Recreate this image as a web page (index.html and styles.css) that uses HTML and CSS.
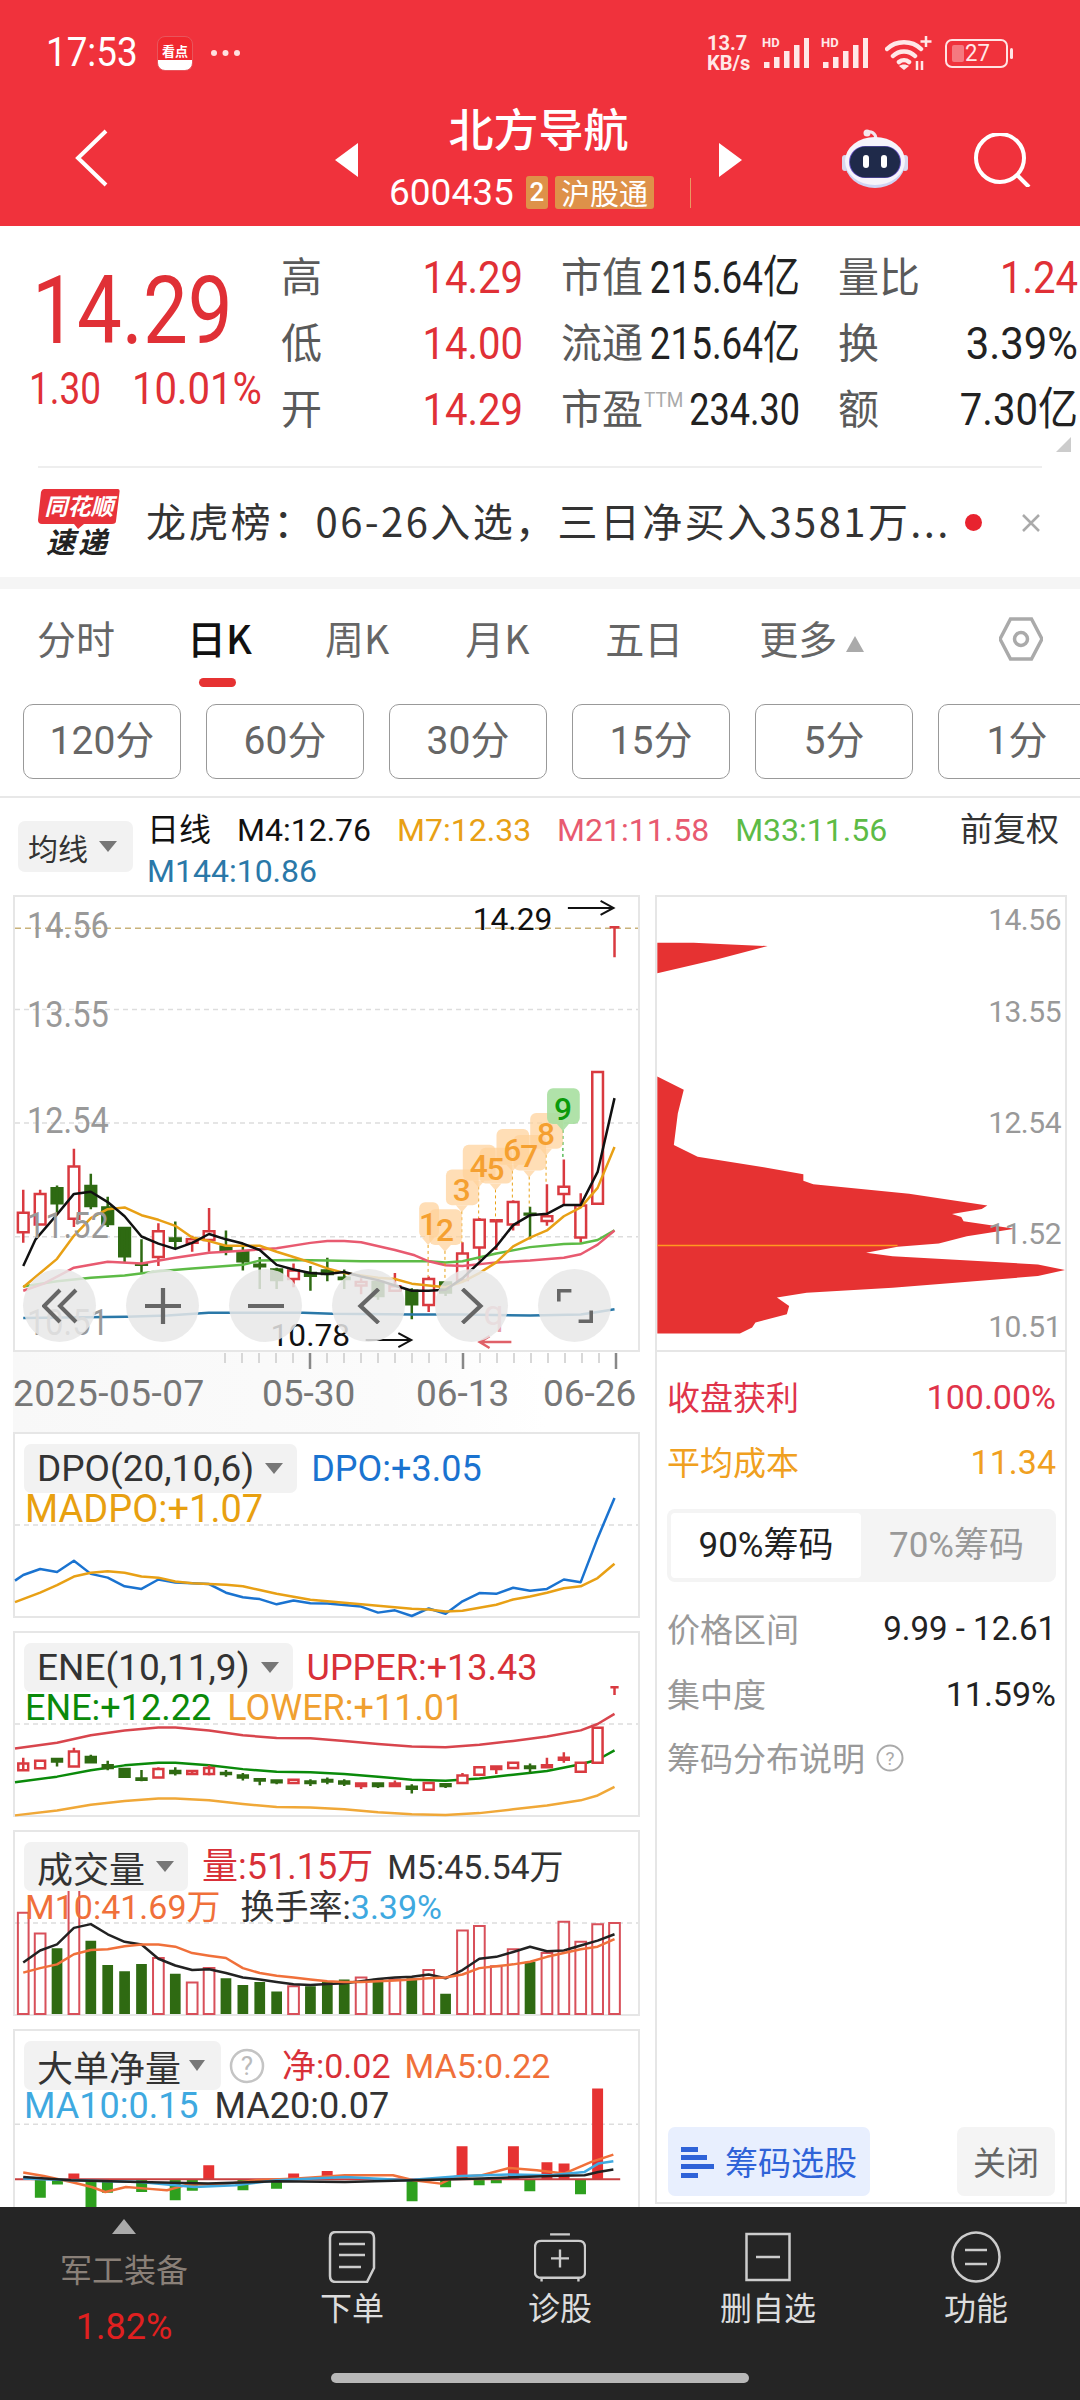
FILE: index.html
```html
<!DOCTYPE html>
<html lang="zh-CN">
<head>
<meta charset="utf-8">
<title>北方导航</title>
<link rel="stylesheet" href="styles.css">
</head>
<body>
<header class="hdr">
  <div class="status">
    <span class="clock">17:53</span>
    <span class="appicon"><span class="appicon-t">看点</span></span>
    <svg class="dots" viewBox="0 0 31 8"><circle cx="4" cy="4" r="3"/><circle cx="15.5" cy="4" r="3"/><circle cx="27" cy="4" r="3"/></svg>
    <div class="status-r">
      <span class="speed">13.7<br>KB/s</span>
      <div class="sigwrap"><span class="hd">HD</span><svg class="sig" viewBox="0 0 47 32"><path d="M2 25h5.500v6H2zM12 20h5.500v11H12zM22 14h5.500v17H22zM32 8h5.500v23H32zM42 1h5.500v30H42z"/></svg></div>
      <div class="sigwrap"><span class="hd">HD</span><svg class="sig" viewBox="0 0 47 32"><path d="M2 25h5.500v6H2zM12 20h5.500v11H12zM22 14h5.500v17H22zM32 8h5.500v23H32zM42 1h5.500v30H42z"/></svg></div>
      <svg class="wifi" viewBox="0 0 48 34"><path class="ws" d="M2 13C11 4 27 4 36 13M8 20c6-6 16-6 22 0M14 26c3-2.500 7-2.500 10 0"/><path d="M19 34l-5-4c3-2 7-2 10 0z" fill="#ffe8e8"/><path class="ws2" d="M41 0v11M35.500 5.500h11M32 25v9M37 25v9"/></svg>
      <span class="batt"><span class="batt-fill"></span><span class="batt-n">27</span></span>
    </div>
  </div>
  <div class="titlebar">
    <div class="tb-l"><svg class="back" viewBox="0 0 33 58"><path d="M31 2 3 29l28 27"/></svg></div>
    <div class="tb-c">
      <svg class="tri" viewBox="0 0 23 34"><path d="M23 0v34L0 17z"/></svg>
      <div class="stack">
        <div class="name">北方导航</div>
        <div class="coderow"><span class="code">600435</span><span class="tag2">2</span><span class="tag">沪股通</span><span class="vline"></span></div>
      </div>
      <svg class="tri" viewBox="0 0 23 34"><path d="M0 0v34l23-17z"/></svg>
    </div>
    <div class="tb-r">
      <svg class="robot" viewBox="0 0 66 60">
        <path d="M25 5c3-3 9 0 9 6" fill="none" stroke="#f2e6ee" stroke-width="3"/>
        <circle cx="25" cy="5" r="3.500" fill="#f4e8ee"/>
        <rect x="0" y="27" width="6" height="16" rx="3" fill="#d8d8ee"/>
        <rect x="60" y="27" width="6" height="16" rx="3" fill="#d8d8ee"/>
        <ellipse cx="33" cy="35" rx="30" ry="25" fill="#cfd4f4"/>
        <ellipse cx="33" cy="33" rx="30" ry="24" fill="#f6f4fb"/>
        <rect x="7" y="18" width="52" height="32" rx="16" fill="#6a56c8"/>
        <rect x="8" y="18.500" width="50" height="31" rx="15.500" fill="#1f2a4a"/>
        <rect x="21" y="27" width="6" height="13" rx="3" fill="#fff"/>
        <rect x="39" y="27" width="6" height="13" rx="3" fill="#fff"/>
      </svg>
      <svg class="search" viewBox="0 0 58 54"><circle cx="27" cy="25" r="24"/><path d="M44 42l12 12"/></svg>
    </div>
  </div>
</header>

<section class="quote">
  <div class="price">
    <div class="big">14.29</div>
    <div class="sub"><span class="s1">1.30</span><span class="s2">10.01%</span></div>
  </div>
  <div class="qgrid">
    <div class="cell"><span class="lb">高</span><span class="v red">14.29</span></div>
    <div class="cell"><span class="lb">市值</span><span class="v v-w">215.64亿</span></div>
    <div class="cell"><span class="lb">量比</span><span class="v red">1.24</span></div>
    <div class="cell"><span class="lb">低</span><span class="v red">14.00</span></div>
    <div class="cell"><span class="lb">流通</span><span class="v v-w">215.64亿</span></div>
    <div class="cell"><span class="lb">换</span><span class="v v-t">3.39%</span></div>
    <div class="cell"><span class="lb">开</span><span class="v red">14.29</span></div>
    <div class="cell"><span class="lb">市盈<sup class="ttm">TTM</sup></span><span class="v v-p">234.30</span></div>
    <div class="cell"><span class="lb">额</span><span class="v">7.30亿</span></div>
  </div>
  <span class="corner"></span>
</section>
<div class="rule"></div>

<section class="news">
  <svg class="newsicon" viewBox="0 0 82 84">
    <path d="M6 0H80Q82 0 81.500 3L78 32Q78 35 74 35H46L40 40 36 35H4Q0 35 0 31L3 3Q4 0 6 0z" fill="#e8323a"/>
    <text x="41" y="26" class="ni-a">同花顺</text>
    <text x="40" y="64" class="ni-b">速递</text>
  </svg>
  <span class="newstext">龙虎榜：06-26入选，三日净买入3581万...</span>
  <span class="newsdot"></span>
  <svg class="newsx" viewBox="0 0 20 20"><path d="M2 2l16 16M18 2 2 18"/></svg>
</section>
<div class="band"></div>

<nav class="tabs">
  <span class="tab">分时</span>
  <span class="tab on">日K</span>
  <span class="tab">周K</span>
  <span class="tab">月K</span>
  <span class="tab">五日</span>
  <span class="tab">更多<i class="up"></i></span>
  <svg class="gear" viewBox="0 0 44 44"><path d="M11.500 2h21L43 22 32.500 42h-21L1 22z"/><circle cx="22" cy="22" r="6.500"/></svg>
</nav>
<div class="periods">
  <span class="pbtn">120分</span><span class="pbtn">60分</span><span class="pbtn">30分</span><span class="pbtn">15分</span><span class="pbtn">5分</span><span class="pbtn">1分</span>
</div>

<section class="legend">
  <div class="chip chip-ma">均线<i class="down"></i></div>
  <div class="legend-lines">
    <div class="lrow"><span class="l-day">日线</span><span class="k">M4:12.76</span><span class="o">M7:12.33</span><span class="p">M21:11.58</span><span class="g">M33:11.56</span><span class="fq">前复权</span></div>
    <div class="lrow"><span class="b">M144:10.86</span></div>
  </div>
</section>

<main class="main">
  <div class="leftcol">
    <div class="kchart">
      <svg class="fill" viewBox="30 45 1512 1277" preserveAspectRatio="none">
        <path class="grid" d="M30 362H1542M30 682H1542M30 1003H1542"/>
        <path class="gold" d="M30 133H1542"/>
        <path class="cg" d="M132 858V935M119 866h26v42h-26zM214 825V925M201 860h26v56h-26zM255 890V975M242 920h26v47h-26zM296 975V1075M283 978h26v80h-26zM337 1010V1108M324 1080h26v2h-26zM419 960V1035M406 1008h26v6h-26zM542 985V1055M529 1030h26v12h-26zM583 1022V1098M570 1045h26v27h-26zM624 1060V1150M611 1082h26v4h-26zM665 1090V1150M652 1095h26v30h-26zM747 1085V1155M734 1105h26v8h-26zM788 1062V1128M775 1098h26v10h-26zM829 1095V1150M816 1118h26v4h-26zM911 1125V1180M898 1130h26v40h-26zM993 1148V1235M980 1155h26v38h-26zM1075 1128V1170M1062 1132h26v28h-26zM1280 918V1010M1267 938h26v2h-26z"/>
        <path class="cr" d="M50 870V935M50 990V1020M37 935h26v55h-26zM91 870V882M91 968V970M78 882h26v86h-26zM173 755V805M173 952V975M160 805h26v147h-26zM378 965V987M378 1060V1085M365 987h26v73h-26zM460 1000V1010M460 1020V1045M447 1010h26v10h-26zM501 922V987M501 1012V1045M488 987h26v25h-26zM706 1078V1098M706 1122V1145M693 1098h26v24h-26zM870 1120V1130M870 1140V1165M857 1130h26v10h-26zM952 1105V1142M939 1142h26v13h-26zM1034 1115V1122M1034 1195V1215M1021 1122h26v73h-26zM1116 1018V1050M1103 1050h26v75h-26zM1157 950V955M1157 1033V1070M1144 955h26v78h-26zM1198 955V1040M1185 956h26v3h-26zM1239 900V905M1239 968V985M1226 905h26v63h-26zM1321 855V945M1321 958V972M1308 945h26v13h-26zM1362 785V862M1362 882V915M1349 862h26v20h-26zM1403 880V915M1403 1005V1020M1390 915h26v90h-26zM1431 538h26v372h-26zM1485 130V215M1473 130h24"/>
        <polyline class="ln blue" points="50,1232 200,1230 300,1228 400,1225 500,1217 600,1217 730,1217 800,1220 1000,1222 1116,1222 1280,1225 1403,1222 1444,1215 1485,1207"/>
        <polyline class="ln lgreen" points="50,1143 132,1128 214,1118 296,1112 378,1100 460,1092 542,1085 583,1082 624,1070 706,1068 788,1070 870,1072 952,1072 1034,1072 1075,1075 1116,1072 1198,1050 1280,1032 1362,1023 1403,1022 1444,1012 1485,985"/>
        <polyline class="ln pink" points="50,1155 100,1135 173,1090 255,1073 337,1078 419,1062 501,1048 583,1042 665,1035 747,1020 788,1015 829,1015 870,1018 952,1040 1000,1055 1034,1072 1075,1083 1116,1085 1198,1075 1280,1070 1362,1062 1403,1052 1444,1025 1485,985"/>
        <polyline class="ln amber" points="50,1145 132,1065 173,1000 214,950 255,925 296,920 337,942 378,955 419,972 460,1005 501,1015 542,1028 583,1028 624,1028 665,1045 706,1060 747,1075 788,1092 829,1105 870,1112 911,1118 952,1122 993,1135 1034,1140 1075,1145 1116,1130 1157,1105 1198,1075 1239,1030 1280,1005 1321,985 1362,945 1403,920 1444,865 1485,750"/>
        <polyline class="ln black" points="50,1085 80,1010 132,940 173,882 214,876 255,905 296,945 337,1002 378,1022 419,1037 460,1020 501,995 542,1010 583,1022 624,1040 665,1082 706,1095 747,1105 788,1108 829,1102 870,1115 911,1125 952,1140 993,1155 1034,1155 1075,1152 1116,1120 1157,1075 1198,1030 1239,970 1280,942 1321,938 1362,913 1403,913 1444,820 1485,612"/>
      </svg>
      <span class="ylab y1">14.56</span><span class="ylab y2">13.55</span><span class="ylab y3">12.54</span><span class="ylab y4">11.52</span><span class="ylab y5">10.51</span>
      <svg class="fill" viewBox="0 0 627 457">
        <path class="dash-o" d="M416 351V383M433 357V388M450 317V349M467 292V324M484 295V326M501 276V306M518 282V313M535 260V290"/>
        <path class="dash-g" d="M552 235V265"/>
        <g class="bub"><rect x="407" y="308" width="20" height="36" rx="6"/><path d="M410 344h12l-6 7z"/></g>
        <g class="bub"><rect x="417" y="315" width="33" height="36" rx="6"/><path d="M427 351h12l-6 7z"/></g>
        <g class="bub"><rect x="434" y="275" width="33" height="36" rx="6"/><path d="M444 311h12l-6 7z"/></g>
        <g class="bub"><rect x="451" y="250" width="33" height="36" rx="6"/><path d="M461 286h12l-6 7z"/></g>
        <g class="bub"><rect x="468" y="253" width="33" height="36" rx="6"/><path d="M478 289h12l-6 7z"/></g>
        <g class="bub"><rect x="485" y="234" width="33" height="36" rx="6"/><path d="M495 270h12l-6 7z"/></g>
        <g class="bub"><rect x="502" y="240" width="33" height="36" rx="6"/><path d="M512 276h12l-6 7z"/></g>
        <g class="bub"><rect x="519" y="218" width="33" height="36" rx="6"/><path d="M529 254h12l-6 7z"/></g>
        <g class="bubg"><rect x="536" y="193" width="33" height="36" rx="6"/><path d="M546 229h12l-6 7z"/></g>
        <text class="td" x="416" y="341">1</text><text class="td" x="433" y="347">2</text><text class="td" x="450" y="307">3</text><text class="td" x="467" y="282">4</text><text class="td" x="484" y="285">5</text><text class="td" x="501" y="266">6</text><text class="td" x="518" y="272">7</text><text class="td" x="535" y="250">8</text><text class="td tdg" x="552" y="225">9</text>
        <text class="pr" x="461" y="33">14.29</text>
        <path class="arr" d="M557 11H602M590 4l13 7-13 7"/>
        <text class="pr" x="257" y="453">10.78</text>
        <path class="arr" d="M353 447H398M386 440l13 7-13 7"/>
        <text class="qq" x="472" y="432">q</text>
        <path class="arr-r" d="M500 449H468M478 443l-10 6 10 6"/>
      </svg>
      <div class="zoomrow">
        <span class="zb"><svg viewBox="0 0 36 34"><path d="M18 1 2 17l16 16M34 1 18 17l16 16"/></svg></span>
        <span class="zb"><svg viewBox="0 0 34 34"><path d="M17 0v34M0 17h34"/></svg></span>
        <span class="zb"><svg viewBox="0 0 34 34"><path d="M0 17h34"/></svg></span>
        <span class="zb"><svg viewBox="0 0 34 34"><path d="M26 1 9 17l17 16"/></svg></span>
        <span class="zb"><svg viewBox="0 0 34 34"><path d="M8 1l17 16L8 33"/></svg></span>
        <span class="zb"><svg viewBox="0 0 40 38"><path d="M2 14V2h14M38 24v12H24"/></svg></span>
      </div>
    </div>
    <div class="axis">
      <svg class="ticks" viewBox="0 0 627 20">
        <path class="tk" d="M212 1v10M229 1v10M246 1v10M263 1v10M280 1v10M297 1v10M314 1v10M331 1v10M348 1v10M365 1v10M382 1v10M399 1v10M416 1v10M433 1v10M467 1v10M484 1v10M501 1v10M518 1v10M535 1v10M552 1v10M569 1v10M586 1v10"/>
        <path class="tkm" d="M297 1v16M450 1v16M603 1v16"/>
      </svg>
      <div class="dates"><span class="d-a">2025-05-07</span><span class="d-b">05-30</span><span class="d-c">06-13</span><span class="d-d">06-26</span></div>
    </div>

    <div class="pane">
      <svg class="fill" viewBox="30 33 1512 484" preserveAspectRatio="none">
        <path class="grid" d="M30 275H1542"/>
        <polyline class="ln2 dpo" points="30,423 50,408 91,392 132,400 173,370 214,405 255,415 296,438 337,445 378,420 419,428 460,430 501,432 542,455 583,467 624,472 665,486 706,476 747,483 788,484 829,488 870,492 911,508 952,502 993,517 1034,497 1075,511 1116,478 1157,456 1198,458 1239,442 1280,450 1321,445 1362,420 1403,427 1444,310 1485,203"/>
        <polyline class="ln2 amber" points="30,480 91,455 132,435 173,412 214,402 255,398 296,402 337,412 378,415 419,425 460,430 501,432 542,434 583,438 624,448 665,458 706,466 747,474 829,482 911,490 993,498 1034,500 1075,505 1116,503 1157,495 1198,487 1239,473 1280,465 1321,455 1362,443 1403,438 1444,416 1485,378"/>
      </svg>
      <div class="prow"><span class="chip">DPO(20,10,6)<i class="down"></i></span><span class="c-blue">DPO:+3.05</span></div>
      <div class="prow2 big2"><span class="c-amber">MADPO:+1.07</span></div>
    </div>

    <div class="pane">
      <svg class="fill" viewBox="30 553 1512 484" preserveAspectRatio="none">
        <path class="grid" d="M30 795H1542"/>
        <polyline class="ln2 ured" points="30,860 132,845 214,825 296,812 378,804 419,804 501,812 583,825 665,832 747,833 829,840 911,848 993,855 1075,857 1157,850 1239,840 1321,828 1403,812 1444,795 1485,768"/>
        <polyline class="ln2 egreen" points="30,950 132,935 214,918 296,905 378,898 419,898 501,905 583,915 665,922 747,923 829,928 911,935 993,943 1075,946 1157,940 1239,930 1321,920 1403,902 1444,890 1485,865"/>
        <polyline class="ln2 lorange" points="30,1038 132,1025 214,1010 296,1000 378,993 419,993 501,998 583,1008 665,1016 747,1017 829,1022 911,1030 993,1035 1075,1037 1157,1032 1239,1022 1321,1012 1403,998 1444,985 1485,962"/>
        <path class="cg" d="M132 885V908M120 888h24v7h-24zM214 877V900M202 883h24v14h-24zM255 893V918M243 905h24v7h-24zM296 913V938M284 915h24v20h-24zM337 917V947M325 940h24v3h-24zM419 910V932M407 920h24v5h-24zM542 917V935M530 925h24v3h-24zM583 925V945M571 932h24v5h-24zM624 940V958M612 942h24v3h-24zM665 943V955M653 945h24v5h-24zM747 942V960M735 948h24v4h-24zM788 937V955M776 944h24v4h-24zM829 942V960M817 948h24v5h-24zM911 950V965M899 953h24v7h-24zM993 955V980M981 962h24v5h-24zM1075 952V965M1063 955h24v5h-24zM1280 900V925M1268 908h24v4h-24z"/>
        <path class="cr" d="M50 885V920M38 900h24v18h-24zM79 893h24v20h-24zM173 858V868M161 868h24v40h-24zM378 910V915M366 915h24v22h-24zM460 920V930M448 920h24v8h-24zM501 905V932M489 912h24v16h-24zM694 943h24v9h-24zM870 960V968M858 953h24v7h-24zM952 945V953M940 953h24v7h-24zM1022 952h24v18h-24zM1116 925V932M1104 932h24v20h-24zM1145 910h24v20h-24zM1198 915V928M1186 908h24v7h-24zM1227 898h24v14h-24zM1321 885V905M1309 905h24v5h-24zM1362 870V898M1350 885h24v5h-24zM1391 898h24v24h-24zM1432 805h24v93h-24zM1485 697V718M1475 697h20"/>
      </svg>
      <div class="prow"><span class="chip">ENE(10,11,9)<i class="down"></i></span><span class="c-ured">UPPER:+13.43</span></div>
      <div class="prow2 tight"><span class="c-green">ENE:+12.22</span><span class="c-lower">LOWER:+11.01</span></div>
    </div>

    <div class="pane">
      <svg class="fill" viewBox="30 1073 1512 484" preserveAspectRatio="none">
        <path class="grid" d="M30 1315H1542"/>
        <path class="vg" d="M119 1382h26V1557h-26zM201 1362h26V1557h-26zM242 1427h26V1557h-26zM283 1443h26V1557h-26zM324 1424h26V1557h-26zM406 1450h26V1557h-26zM529 1462h26V1557h-26zM570 1480h26V1557h-26zM611 1472h26V1557h-26zM652 1497h26V1557h-26zM734 1483h26V1557h-26zM775 1472h26V1557h-26zM816 1465h26V1557h-26zM898 1463h26V1557h-26zM980 1462h26V1557h-26zM1062 1503h26V1557h-26zM1267 1418h26V1557h-26z"/>
        <path class="vr" d="M37 1288h26V1557h-26zM78 1343h26V1557h-26zM160 1220h26V1557h-26zM365 1408h26V1557h-26zM447 1473h26V1557h-26zM488 1435h26V1557h-26zM693 1483h26V1557h-26zM857 1460h26V1557h-26zM939 1465h26V1557h-26zM1021 1440h26V1557h-26zM1103 1335h26V1557h-26zM1144 1323h26V1557h-26zM1185 1430h26V1557h-26zM1226 1385h26V1557h-26zM1308 1395h26V1557h-26zM1349 1312h26V1557h-26zM1390 1365h26V1557h-26zM1431 1318h26V1557h-26zM1472 1315h26V1557h-26z"/>
        <polyline class="ln2 vk" points="50,1420 91,1388 132,1372 173,1328 214,1318 255,1345 296,1365 337,1372 378,1410 419,1428 460,1440 501,1438 542,1448 583,1460 624,1465 665,1472 706,1478 747,1480 788,1477 829,1475 870,1470 911,1464 952,1460 993,1458 1034,1452 1075,1462 1116,1440 1157,1410 1198,1405 1239,1392 1280,1378 1321,1390 1362,1388 1403,1375 1444,1362 1485,1345"/>
        <polyline class="ln2 vo" points="50,1447 91,1435 132,1425 173,1398 214,1387 255,1385 296,1377 337,1372 378,1372 419,1378 460,1395 501,1402 542,1408 583,1435 624,1448 665,1455 706,1460 747,1465 788,1470 829,1472 870,1472 911,1470 952,1468 993,1465 1034,1462 1075,1460 1116,1452 1157,1435 1198,1430 1239,1425 1280,1418 1321,1405 1362,1395 1403,1385 1444,1378 1485,1358"/>
      </svg>
      <div class="prow"><span class="chip chip-c">成交量<i class="down"></i></span><span class="c-vred">量:51.15万</span><span class="c-dark f34">M5:45.54万</span></div>
      <div class="prow2 f34"><span class="c-vo">M10:41.69万</span><span class="c-dark">换手率:<span class="c-sky">3.39%</span></span></div>
    </div>

    <div class="pane pane-last">
      <svg class="fill" viewBox="18 88 910 533" preserveAspectRatio="none">
        <path class="grid" d="M18 367H928"/>
        <path class="bg" d="M47 532h16v55h-16zM72 532h16v16h-16zM121 532h16v89h-16zM145 532h16v40h-16zM195 532h16v38h-16zM244 532h16v63h-16zM269 532h16v34h-16zM343 532h16v33h-16zM392 532h16v28h-16zM590 532h16v66h-16zM639 532h16v24h-16zM688 532h16v18h-16zM713 532h16v12h-16zM762 532h16v36h-16zM836 532h16v45h-16z"/>
        <path class="br" d="M96 515h16v17H96zM293 490h16v42h-16zM417 515h16v17h-16zM466 507h16v25h-16zM663 433h16v99h-16zM738 433h16v99h-16zM787 481h16v51h-16zM812 485h16v47h-16zM861 260h16v272h-16z"/>
        <path class="zero" d="M18 532H902"/>
        <polyline class="ln2 vo" points="30,512 60,522 100,540 130,555 150,570 180,555 210,560 240,565 270,548 320,548 370,535 430,530 500,520 570,520 600,535 640,545 660,525 700,520 740,498 780,505 820,515 860,480 892,458"/>
        <polyline class="ln2 sky" points="30,530 100,535 200,540 280,555 340,550 400,535 500,525 590,535 670,522 740,518 800,520 850,510 870,485 892,478"/>
        <polyline class="ln2 vk" points="30,525 100,535 200,540 300,545 400,538 500,540 600,535 700,530 800,522 850,520 870,510 892,503"/>
      </svg>
      <div class="prow f34"><span class="chip chip-d">大单净量<i class="down"></i></span><svg class="qmark" viewBox="0 0 36 36"><circle cx="18" cy="18" r="16"/><text x="18" y="27">?</text></svg><span class="c-ured">净:0.02</span><span class="c-vo">MA5:0.22</span></div>
      <div class="prow2 last2"><span class="c-sky">MA10:0.15</span><span class="c-dark">MA20:0.07</span></div>
    </div>
  </div>

  <aside class="rightcol">
    <div class="cyq">
      <svg class="fill" viewBox="47 47 1235 1366" preserveAspectRatio="none">
        <path class="cyq-p" d="M48 185H158L270 190 382 195 230 235 48 277zM48 588 128 628 110 700 98 795 170 830 370 862 490 883V903L520 913 810 942 1047 977 1030 988 940 1003 968 1012 975 1025 1130 1047 985 1070 900 1092 775 1102 680 1120 760 1130 1200 1155 1282 1172 1200 1190 760 1225 500 1240 410 1255 447 1280 440 1305 345 1330 335 1345 298 1363H48z"/>
        <path class="cyq-o" d="M48 1098H775"/>
      </svg>
      <span class="rlab r1">14.56</span><span class="rlab r2">13.55</span><span class="rlab r3">12.54</span><span class="rlab r4">11.52</span><span class="rlab r5">10.51</span>
    </div>
    <div class="stats">
      <div class="st t-red"><span>收盘获利</span><span class="num">100.00%</span></div>
      <div class="st t-org"><span>平均成本</span><span class="num">11.34</span></div>
      <div class="toggle"><span class="tg on">90%筹码</span><span class="tg">70%筹码</span></div>
      <div class="st t-gray st-first"><span>价格区间</span><span class="num num-r t-dark">9.99 - 12.61</span></div>
      <div class="st t-gray"><span>集中度</span><span class="num t-dark">11.59%</span></div>
      <div class="st t-gray st-help"><span>筹码分布说明</span><svg class="qmark2" viewBox="0 0 28 28"><circle cx="14" cy="14" r="12.500"/><text x="14" y="20.500">?</text></svg></div>
    </div>
    <div class="actions">
      <span class="act act-b"><svg class="bars" viewBox="0 0 33 32"><path d="M0 1h17v5H0zM0 9h26v5H0zM0 18h33v5H0zM0 27h17v5H0z"/></svg>筹码选股</span>
      <span class="act act-g">关闭</span>
    </div>
  </aside>
</main>

<footer class="bar">
  <div class="bar-row">
    <div class="bi bi-first"><i class="tup"></i><span class="sector">军工装备</span><span class="spct">1.82%</span></div>
    <div class="bi"><svg class="ic ic-doc" viewBox="0 0 46 52"><path d="M7 1h32q6 0 6 6v30l-7 14H7q-6 0-6-6V7q0-6 6-6zM10 13h26M10 24h26M10 36h22"/></svg><span>下单</span></div>
    <div class="bi"><svg class="ic ic-case" viewBox="0 0 55 52"><path d="M17 2h21M8 9h39q7 0 7 7v26q0 6-7 6H8q-7 0-7-6V16q0-7 7-7zM27.500 18v19M18 27.500h19M8 48v4M47 48v4"/></svg><span>诊股</span></div>
    <div class="bi"><svg class="ic ic-minus" viewBox="0 0 46 52"><path d="M1.500 3h43v46h-43zM11 26h24"/></svg><span>删自选</span></div>
    <div class="bi"><svg class="ic ic-fn" viewBox="0 0 50 52"><ellipse cx="25" cy="26" rx="23.500" ry="24.500"/><path d="M14 19h22M14 33h22"/></svg><span>功能</span></div>
  </div>
  <div class="home"></div>
</footer>
</body>
</html>
```

FILE: styles.css
```css
:root {
  --cjk: "Noto Sans CJK SC", sans-serif;
  --rob: Roboto, "Noto Sans CJK SC", sans-serif;
}
* { box-sizing: border-box; }
html, body { margin: 0; padding: 0; }
body { width: 1080px; height: 2400px; overflow: hidden; background: #fff; font-family: var(--cjk); color: #222; position: relative; }
i { display: inline-block; font-style: normal; }
svg { display: block; }

/* header */
.hdr { height: 226px; background: #f0323c; color: #fff; }
.status { height: 106px; display: flex; align-items: center; padding: 0 72px 0 46px; }
.clock { font: 400 40px/1 var(--rob); width: 111px; transform: scaleX(.92); transform-origin: left center; }
.appicon { width: 36px; height: 35px; border-radius: 8px; background: linear-gradient(#f0282f 0 70%, #fff 70%); display: flex; justify-content: center; padding-top: 7px; border: 1px solid #e8555c; }
.appicon-t { font: 700 13px/1 var(--cjk); }
.dots { width: 31px; height: 8px; margin-left: 17px; fill: #ffe0e0; }
.status-r { margin-left: auto; display: flex; align-items: center; }
.speed { font: 700 20px/20px var(--rob); width: 55px; color: #ffe8e8; }
.sigwrap { width: 47px; height: 32px; margin-right: 12px; position: relative; }
.sig { width: 47px; height: 32px; fill: #ffe8e8; }
.hd { position: absolute; left: 0; top: -1px; font: 700 13px/13px var(--rob); color: #ffe8e8; }
.wifi { width: 48px; height: 34px; margin-left: 5px; }
.ws { fill: none; stroke: #ffe8e8; stroke-width: 4.500; stroke-linecap: round; }
.ws2 { fill: none; stroke: #ffe8e8; stroke-width: 2.500; }
.batt { width: 63px; height: 29px; margin-left: 12px; border: 2px solid #ffe4e4; border-radius: 7px; position: relative; display: flex; align-items: center; padding-left: 17px; }
.batt::after { content: ""; position: absolute; right: -7px; top: 7px; width: 3px; height: 11px; background: #ffe4e4; border-radius: 2px; }
.batt-fill { position: absolute; left: 5px; top: 4px; bottom: 4px; width: 12px; background: rgba(255,255,255,.35); border-radius: 2px; }
.batt-n { font: 400 24px/1 var(--rob); position: relative; color: #ffe8e8; transform: scaleX(.92); }

.titlebar { display: grid; grid-template-columns: 335px 407px 338px; height: 120px; }
.tb-l { padding: 23px 0 0 75px; }
.back { width: 33px; height: 58px; fill: none; stroke: #fff; stroke-width: 4; }
.tb-c { display: flex; justify-content: space-between; align-items: flex-start; }
.tb-c .tri { width: 23px; height: 34px; fill: #fff; margin-top: 37px; }
.stack { flex: 1; }
.name { font: 500 45px/52px var(--cjk); text-align: center; margin-top: -4px; }
.coderow { display: flex; align-items: center; height: 33px; margin-top: 22px; padding-left: 31px; }
.code { font: 400 37px/33px var(--rob); width: 124px; }
.tag2 { margin-left: 13px; width: 22px; height: 33px; background: #de9149; border-radius: 3px; text-align: center; font: 500 26px/33px var(--rob); }
.tag { margin-left: 7px; width: 99px; height: 33px; background: #de9149; border-radius: 3px; text-align: center; font: 400 29px/33px var(--cjk); }
.vline { width: 1px; height: 30px; background: #e89a62; margin-left: 36px; }
.tb-r { display: flex; align-items: flex-start; padding: 22px 0 0 100px; }
.robot { width: 66px; height: 60px; }
.search { width: 58px; height: 54px; margin: 5px 0 0 65px; fill: none; stroke: #fff; stroke-width: 4; }

/* quote */
.quote { height: 241px; display: flex; position: relative; padding-top: 18px; }
.price { width: 281px; padding: 22px 0 0 29px; }
.big { font: 400 94px/90px var(--rob); color: #e03036; height: 90px; margin-left: 3px; transform: scaleX(.85); transform-origin: left center; white-space: nowrap; }
.sub { display: flex; gap: 17px; height: 66px; align-items: center; font: 400 44px/1 var(--rob); color: #e03036; }
.sub span { display: inline-block; transform-origin: left center; white-space: nowrap; }
.s1 { transform: scaleX(.84); }
.s2 { transform: scaleX(.91); }
.qgrid { flex: 1; display: grid; grid-template-columns: 242px 239px 240px; grid-auto-rows: 66px; column-gap: 38px; }
.cell { display: flex; align-items: center; justify-content: space-between; }
.lb { font: 400 41px/1 var(--cjk); color: #5a5a5a; position: relative; white-space: nowrap; flex: none; margin-bottom: 6px; }
.ttm { position: absolute; left: 100%; top: 4px; font: 400 20px/1 var(--rob); color: #aaa; margin-left: 1px; transform: scaleX(.95); transform-origin: left center; }
.v { font: 400 45px/1 var(--rob); color: #222; white-space: nowrap; width: 0; flex: none; display: flex; justify-content: flex-end; transform: scaleX(.89); transform-origin: right center; }
.v.red { color: #e03036; }
.v-w { transform: scaleX(.82); }
.v-t { transform: scaleX(.93); }
.v-p { transform: scaleX(.8); }
.corner { position: absolute; right: 9px; top: 211px; width: 0; height: 0; border-left: 15px solid transparent; border-bottom: 15px solid #ccc; }
.rule { height: 2px; margin: -1px 38px 0; background: #eee; }

/* news */
.news { height: 109px; display: flex; align-items: center; padding-left: 38px; position: relative; }
.newsicon { width: 82px; height: 84px; flex: none; margin-top: 16px; overflow: visible; }
.ni-a { font: italic 700 23px var(--cjk); fill: #fff; text-anchor: middle; }
.ni-b { font: italic 700 29px var(--cjk); fill: #222; text-anchor: middle; letter-spacing: 3px; }
.newstext { font: 400 40px/1 var(--cjk); color: #333; margin: 0 0 5px 26px; width: 799px; white-space: nowrap; letter-spacing: 2.4px; }
.newsdot { width: 17px; height: 17px; border-radius: 50%; background: #e8232f; margin-left: 20px; }
.newsx { width: 20px; height: 20px; margin-left: 39px; fill: none; stroke: #aaa; stroke-width: 2.500; }
.band { height: 12px; background: #f5f5f5; }

/* tabs */
.tabs { height: 107px; display: flex; align-items: flex-start; gap: 76px; padding: 24px 0 0 37px; position: relative; }
.tab { font: 400 39px/48px var(--cjk); color: #666; position: relative; white-space: nowrap; }
.tab.on { color: #111; font-weight: 500; margin: 0 -3px 0 -4px; }
.tab.on::after { content: ""; position: absolute; left: 12px; top: 65px; width: 37px; height: 9px; border-radius: 5px; background: #e63232; }
.up { width: 0; height: 0; border-left: 9px solid transparent; border-right: 9px solid transparent; border-bottom: 16px solid #aaa; margin-left: 9px; vertical-align: 2px; }
.gear { width: 44px; height: 44px; position: absolute; right: 37px; top: 28px; fill: none; stroke: #aaa; stroke-width: 3.500; }
.periods { height: 102px; padding: 8px 0 0 23px; display: flex; gap: 25px; border-bottom: 2px solid #e8e8e8; overflow: hidden; }
.pbtn { flex: none; width: 158px; height: 75px; border: 1px solid #999; border-radius: 10px; font: 400 39px/73px var(--rob); color: #666; text-align: center; }

/* legend */
.legend { height: 97px; display: flex; align-items: flex-start; padding-left: 18px; }
.chip { display: inline-flex; align-items: center; background: #f2f2f2; border-radius: 7px; font: 400 37px/1 var(--rob); color: #333; white-space: nowrap; }
.chip-ma { margin-top: 23px; width: 115px; height: 51px; font: 400 30px/1 var(--cjk); padding-left: 10px; }
.down { width: 0; height: 0; border-left: 9px solid transparent; border-right: 9px solid transparent; border-top: 11px solid #777; margin-left: 11px; }
.legend-lines { margin-left: 14px; padding-top: 11px; flex: 1; }
.lrow { display: flex; gap: 26px; height: 41px; align-items: center; font: 400 32px/1 var(--rob); padding-right: 21px; white-space: nowrap; }
.l-day { color: #111; }
.k { color: #111; }
.o { color: #e8a015; }
.p { color: #e85a70; }
.g { color: #5dbb46; }
.b { color: #2a78a8; }
.fq { margin-left: auto; color: #333; font-size: 33px; }

/* main */
.main { height: 1312px; display: grid; grid-template-columns: 627px 412px; column-gap: 15px; padding-left: 13px; overflow: hidden; }
.leftcol { display: flex; flex-direction: column; }
.fill { position: absolute; left: 0; top: 0; width: 100%; height: 100%; overflow: visible; }
.fill * { vector-effect: non-scaling-stroke; }
.kchart { height: 457px; border: 2px solid #e6e6e6; position: relative; flex: none; }
.grid { stroke: #ddd; stroke-width: 1.500; stroke-dasharray: 5 4; fill: none; }
.gold { stroke: #c9b27a; stroke-width: 1.500; stroke-dasharray: 6 4; fill: none; }
.cg { fill: #2e6a12; stroke: #2e6a12; stroke-width: 2.500; }
.cr { fill: #fff; stroke: #d93a40; stroke-width: 2.500; }
.ln { fill: none; stroke-width: 2.500; stroke-linejoin: round; }
.ln2 { fill: none; stroke-width: 2.500; stroke-linejoin: round; }
.blue { stroke: #2a78a8; }
.lgreen { stroke: #5dbb46; }
.pink { stroke: #e85a70; }
.amber { stroke: #e8a015; }
.black { stroke: #111; }
.ylab { position: absolute; left: 12px; font: 400 37px/40px var(--rob); color: #999; transform: scaleX(.88); transform-origin: left center; }
.y1 { top: 9px; } .y2 { top: 98px; } .y3 { top: 204px; } .y4 { top: 309px; } .y5 { top: 406px; }
.dash-o { stroke: #e8a015; stroke-width: 1; stroke-dasharray: 3 3; fill: none; }
.dash-g { stroke: #0a9a0a; stroke-width: 1; stroke-dasharray: 3 3; fill: none; }
.bub { fill: #ffd29a; opacity: .72; }
.bubg { fill: #a8dfa0; opacity: .9; }
.td { font: 500 32px var(--rob); fill: #f5a030; text-anchor: middle; }
.tdg { fill: #0a9a0a; }
.pr { font: 400 32px var(--rob); fill: #111; }
.arr { fill: none; stroke: #111; stroke-width: 2; }
.arr-r { fill: none; stroke: #e06068; stroke-width: 2.500; }
.qq { font: 400 36px var(--rob); fill: #e8a0a8; }
.zoomrow { position: absolute; left: 8px; top: 372px; display: flex; gap: 30px; }
.zb { width: 73px; height: 73px; border-radius: 50%; background: rgba(232,232,232,.85); display: flex; align-items: center; justify-content: center; }
.zb svg { width: 36px; height: 36px; fill: none; stroke: #666; stroke-width: 4; }
.axis { height: 80px; flex: none; position: relative; background: linear-gradient(90deg, #f8f8f8 0, #fbfbfb 60%, #fff 85%); }
.ticks { width: 627px; height: 20px; }
.tk { stroke: #ccc; stroke-width: 1.500; }
.tkm { stroke: #888; stroke-width: 2.500; }
.dates { display: flex; font: 400 37px/40px var(--rob); color: #777; margin-top: 2px; white-space: nowrap; }
.d-a { margin-left: 0; width: 193px; letter-spacing: .5px; }
.d-b { margin-left: 56px; width: 95px; }
.d-c { margin-left: 59px; width: 95px; }
.d-d { margin-left: 32px; width: 95px; }
.pane { height: 186px; border: 2px solid #e6e6e6; position: relative; flex: none; margin-bottom: 13px; }
.pane-last { height: 180px; margin-bottom: 0; border-bottom: 0; }
.prow { display: flex; align-items: center; gap: 14px; height: 49px; margin: 10px 0 0 9px; position: relative; font: 400 36px/1 var(--rob); white-space: nowrap; }
.prow2 { display: flex; align-items: center; gap: 20px; height: 40px; margin: -4px 0 0 10px; position: relative; font: 400 36px/1 var(--rob); white-space: nowrap; }
.big2 { font-size: 38px; }
.tight { gap: 16px; }
.last2 { margin-left: 9px; gap: 16px; }
.f34 { font-size: 34px; }
.prow .chip { height: 49px; padding: 0 14px 0 13px; }
.c-blue { color: #1a73d0; }
.c-amber { color: #e8a010; }
.c-ured { color: #d83038; }
.c-green { color: #0a8a0a; }
.c-lower { color: #f0a030; }
.c-vred { color: #d83038; }
.c-dark { color: #333; }
.c-vo { color: #f0703a; }
.c-sky { color: #3fa9e0; }
.prow .chip-c, .prow .chip-d { font: 400 36px/1 var(--cjk); }
.prow .chip-d { padding: 0 16px 0 13px; }
.chip-d .down { margin-left: 8px; border-left-width: 8px; border-right-width: 8px; }
.dpo { stroke: #1a73d0; }
.ured { stroke: #d8454d; }
.egreen { stroke: #0a8a0a; }
.lorange { stroke: #f0a838; }
.vg { fill: #2f6a12; }
.vr { fill: none; stroke: #d8505a; stroke-width: 2; }
.vk { stroke: #222; }
.vo { stroke: #f0703a; }
.sky { stroke: #3fa9e0; }
.bg { fill: #2ea01e; }
.br { fill: #e63232; }
.zero { stroke: #c84040; stroke-width: 2; fill: none; }
.qmark { width: 36px; height: 36px; fill: none; stroke: #c4c4c4; stroke-width: 2.500; margin: 0 3px 0 -6px; flex: none; }
.qmark text { font: 400 26px var(--rob); fill: #bbb; stroke: none; text-anchor: middle; }

/* right */
.rightcol { height: 1309px; border: 2px solid #e6e6e6; display: flex; flex-direction: column; }
.cyq { height: 455px; border-bottom: 2px solid #e6e6e6; position: relative; flex: none; }
.cyq-p { fill: #e63232; }
.cyq-o { stroke: #ff9a20; stroke-width: 1.500; fill: none; }
.rlab { position: absolute; right: 4px; font: 400 30px/36px var(--rob); color: #999; letter-spacing: -.5px; }
.r1 { top: 5px; } .r2 { top: 97px; } .r3 { top: 208px; } .r4 { top: 319px; } .r5 { top: 412px; }
.stats { padding: 12px 9px 0 10px; font: 400 33px/1 var(--cjk); }
.st { height: 65px; display: flex; align-items: center; justify-content: space-between; }
.num { font: 400 34px/1 var(--rob); }
.num-r { font-size: 33px; }
.t-red { color: #e0344a; }
.t-org { color: #f0a020; }
.t-gray { color: #999; }
.t-dark { color: #222; }
.st-first { margin-top: 14px; }
.st-help { justify-content: flex-start; gap: 11px; height: 63px; }
.qmark2 { width: 28px; height: 28px; fill: none; stroke: #aaa; stroke-width: 2; }
.qmark2 text { font: 400 19px var(--rob); fill: #aaa; stroke: none; text-anchor: middle; }
.toggle { height: 73px; margin-top: 15px; background: #f4f4f4; border-radius: 8px; padding: 4px; display: grid; grid-template-columns: 190px 1fr; }
.tg { border-radius: 4px; text-align: center; font: 400 35px/65px var(--rob); color: #999; }
.tg.on { background: #fff; color: #222; }
.actions { margin-top: auto; display: flex; justify-content: space-between; padding: 0 10px 6px 11px; }
.act { height: 69px; border-radius: 7px; display: flex; align-items: center; justify-content: center; font: 400 33px/1 var(--cjk); }
.act-b { width: 202px; background: #e8effe; color: #2f63d8; gap: 11px; }
.bars { width: 33px; height: 32px; fill: #2f63d8; }
.act-g { width: 98px; background: #f4f4f4; color: #666; }

/* bottom bar */
.bar { position: absolute; left: 0; right: 0; top: 2207px; height: 193px; background: #252525; color: #ddd; }
.bar-row { height: 166px; display: flex; padding-left: 20px; }
.bi { width: 208px; display: flex; flex-direction: column; align-items: center; padding-top: 24px; font: 400 32px/44px var(--cjk); }
.bi-first { padding-top: 12px; margin-right: 20px; }
.tup { width: 0; height: 0; border-left: 12px solid transparent; border-right: 12px solid transparent; border-bottom: 15px solid #aaa; }
.sector { color: #8a8078; margin-top: 12px; font-size: 32px; }
.spct { color: #e02020; margin-top: 15px; font: 400 36px/44px var(--rob); }
.ic { width: 52px; height: 52px; margin-bottom: 1px; fill: none; stroke: #ccc; stroke-width: 2.500; }
.home { width: 418px; height: 10px; margin: 0 auto; background: #b8b8b8; border-radius: 5px; }
```
